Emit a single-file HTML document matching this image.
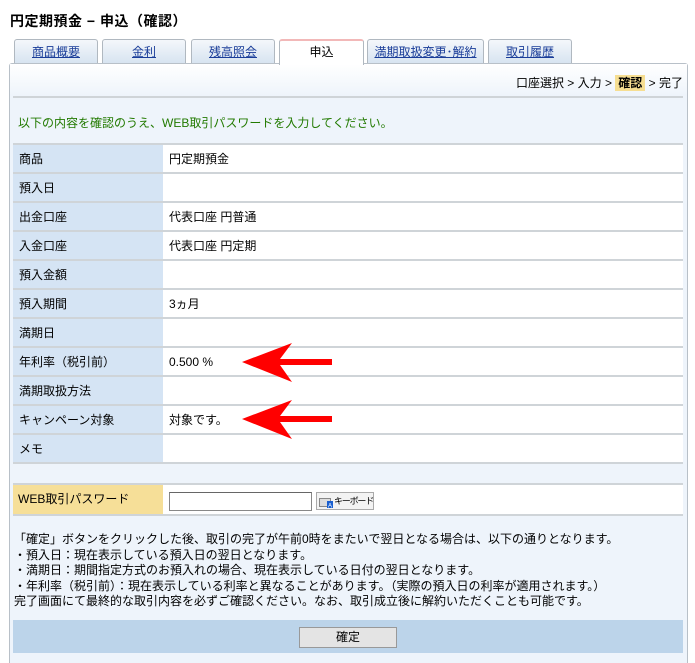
<!DOCTYPE html>
<html style="overflow:hidden;height:663px"><head><meta charset="utf-8"><style>
*{margin:0;padding:0;box-sizing:border-box}
body{width:695px;height:663px;background:#fff;font-family:"Liberation Sans","Noto Sans CJK JP",sans-serif;font-size:12px;color:#000;position:relative;overflow:hidden}
.abs{position:absolute}
.title{left:10px;top:11px;font-size:14px;font-weight:bold;letter-spacing:0.5px}
.tab{position:absolute;top:39px;height:25px;border:1px solid #b0b8c0;border-bottom:none;border-radius:3px 3px 0 0;background:linear-gradient(#f4f7fb,#d6e3f0);text-align:center;line-height:24px;font-size:12px}
.tab a{color:#1a3d99;text-decoration:underline}
.tab.act{background:#fff;border-top:2px solid #f2b8b8;height:26px;z-index:2;line-height:23px}
.panel{left:9px;top:63px;width:679px;height:610px;border:1px solid #b8c0c8;background:#eef4fb;border-radius:3px}
.bc{right:12px;top:74px;font-size:12px}
.bc b{background:#f6de92;padding:1px 3px}
.hr{left:13px;width:670px;height:2px;background:#cfd4d8}
.msg{left:18px;top:114px;color:#227a00;font-size:12px}
table{position:absolute;left:13px;top:143px;width:670px;border-collapse:collapse}
td{height:29px;border-top:2px solid #cfd4d8;padding-left:6px;vertical-align:middle}
td.l{width:150px;background:#d5e4f4}
td.v{background:#fff;padding-left:6px}
.pw{left:13px;top:483px;width:670px;height:33px;background:#fff;border-top:2px solid #cfd4d8;border-bottom:2px solid #cfd4d8}
.pwl{left:0;top:0;width:150px;height:29px;background:#f6df98;line-height:29px;padding-left:5px}
.inp{left:156px;top:7px;width:143px;height:19px;border:1px solid #888;border-top-color:#666;background:#fff}
.kb{left:303px;top:7px;width:58px;height:18px;border:1px solid #aaa;background:#f3f3f3;font-size:9px;line-height:16px;padding-left:17px;white-space:nowrap;overflow:hidden;letter-spacing:-1.2px}
.notes{left:14px;top:532px;font-size:12px;line-height:15.6px;white-space:nowrap}
.bar{left:13px;top:620px;width:670px;height:33px;background:#bcd4ea}
.btn{left:299px;top:627px;width:98px;height:21px;border:1px solid #999;background:#e4e4e4;text-align:center;line-height:19px}
</style></head><body>
<div class="abs title">円定期預金 − 申込（確認）</div>
<div class="tab" style="left:14px;width:84px"><a>商品概要</a></div>
<div class="tab" style="left:102px;width:84px"><a>金利</a></div>
<div class="tab" style="left:191px;width:84px"><a>残高照会</a></div>
<div class="tab act" style="left:279px;width:85px">申込</div>
<div class="tab" style="left:367px;width:117px"><a>満期取扱変更･解約</a></div>
<div class="tab" style="left:488px;width:84px"><a>取引履歴</a></div>
<div class="abs panel" style="height:600px;border-bottom:none;border-radius:3px 3px 0 0"></div>
<div class="abs" style="left:10px;top:64px;width:677px;height:32px;background:linear-gradient(#fff,#eef4fb)"></div>
<div class="abs bc">口座選択 &gt; 入力 &gt; <b>確認</b> &gt; 完了</div>
<div class="abs hr" style="top:96px"></div>
<div class="abs msg">以下の内容を確認のうえ、WEB取引パスワードを入力してください。</div>
<table>
<tr><td class="l">商品</td><td class="v">円定期預金</td></tr>
<tr><td class="l">預入日</td><td class="v"></td></tr>
<tr><td class="l">出金口座</td><td class="v">代表口座 円普通</td></tr>
<tr><td class="l">入金口座</td><td class="v">代表口座 円定期</td></tr>
<tr><td class="l">預入金額</td><td class="v"></td></tr>
<tr><td class="l">預入期間</td><td class="v">3ヵ月</td></tr>
<tr><td class="l">満期日</td><td class="v"></td></tr>
<tr><td class="l">年利率（税引前）</td><td class="v">0.500 %</td></tr>
<tr><td class="l">満期取扱方法</td><td class="v"></td></tr>
<tr><td class="l">キャンペーン対象</td><td class="v">対象です。</td></tr>
<tr><td class="l">メモ</td><td class="v"></td></tr>
<tr><td style="height:2px;padding:0;border-top:2px solid #cfd4d8" colspan="2"></td></tr>
</table>
<svg class="abs" style="left:0;top:0" width="695" height="663">
<g fill="#f00">
<polygon points="242,362 292,343 280,359 332,359 332,365 280,365 292,382"/>
<polygon points="242,419 292,400 280,416 332,416 332,422 280,422 292,439"/>
</g></svg>
<div class="abs pw">
<div class="abs pwl">WEB取引パスワード</div>
<div class="abs inp"></div>
<div class="abs kb"><svg class="abs" style="left:2px;top:2px" width="15" height="13"><rect x="0.5" y="3.5" width="11" height="8" fill="#ddd" stroke="#888"/><rect x="8" y="6" width="6" height="7" fill="#1a5fd0"/><text x="9" y="12.5" font-size="6" fill="#fff" font-family="Liberation Sans">A</text></svg>キーボード</div>
</div>
<div class="abs notes">「確定」ボタンをクリックした後、取引の完了が午前0時をまたいで翌日となる場合は、以下の通りとなります。<br>・預入日：現在表示している預入日の翌日となります。<br>・満期日：期間指定方式のお預入れの場合、現在表示している日付の翌日となります。<br>・年利率（税引前）：現在表示している利率と異なることがあります。（実際の預入日の利率が適用されます。）<br>完了画面にて最終的な取引内容を必ずご確認ください。なお、取引成立後に解約いただくことも可能です。</div>
<div class="abs bar"></div>
<div class="abs btn">確定</div>
</body></html>
